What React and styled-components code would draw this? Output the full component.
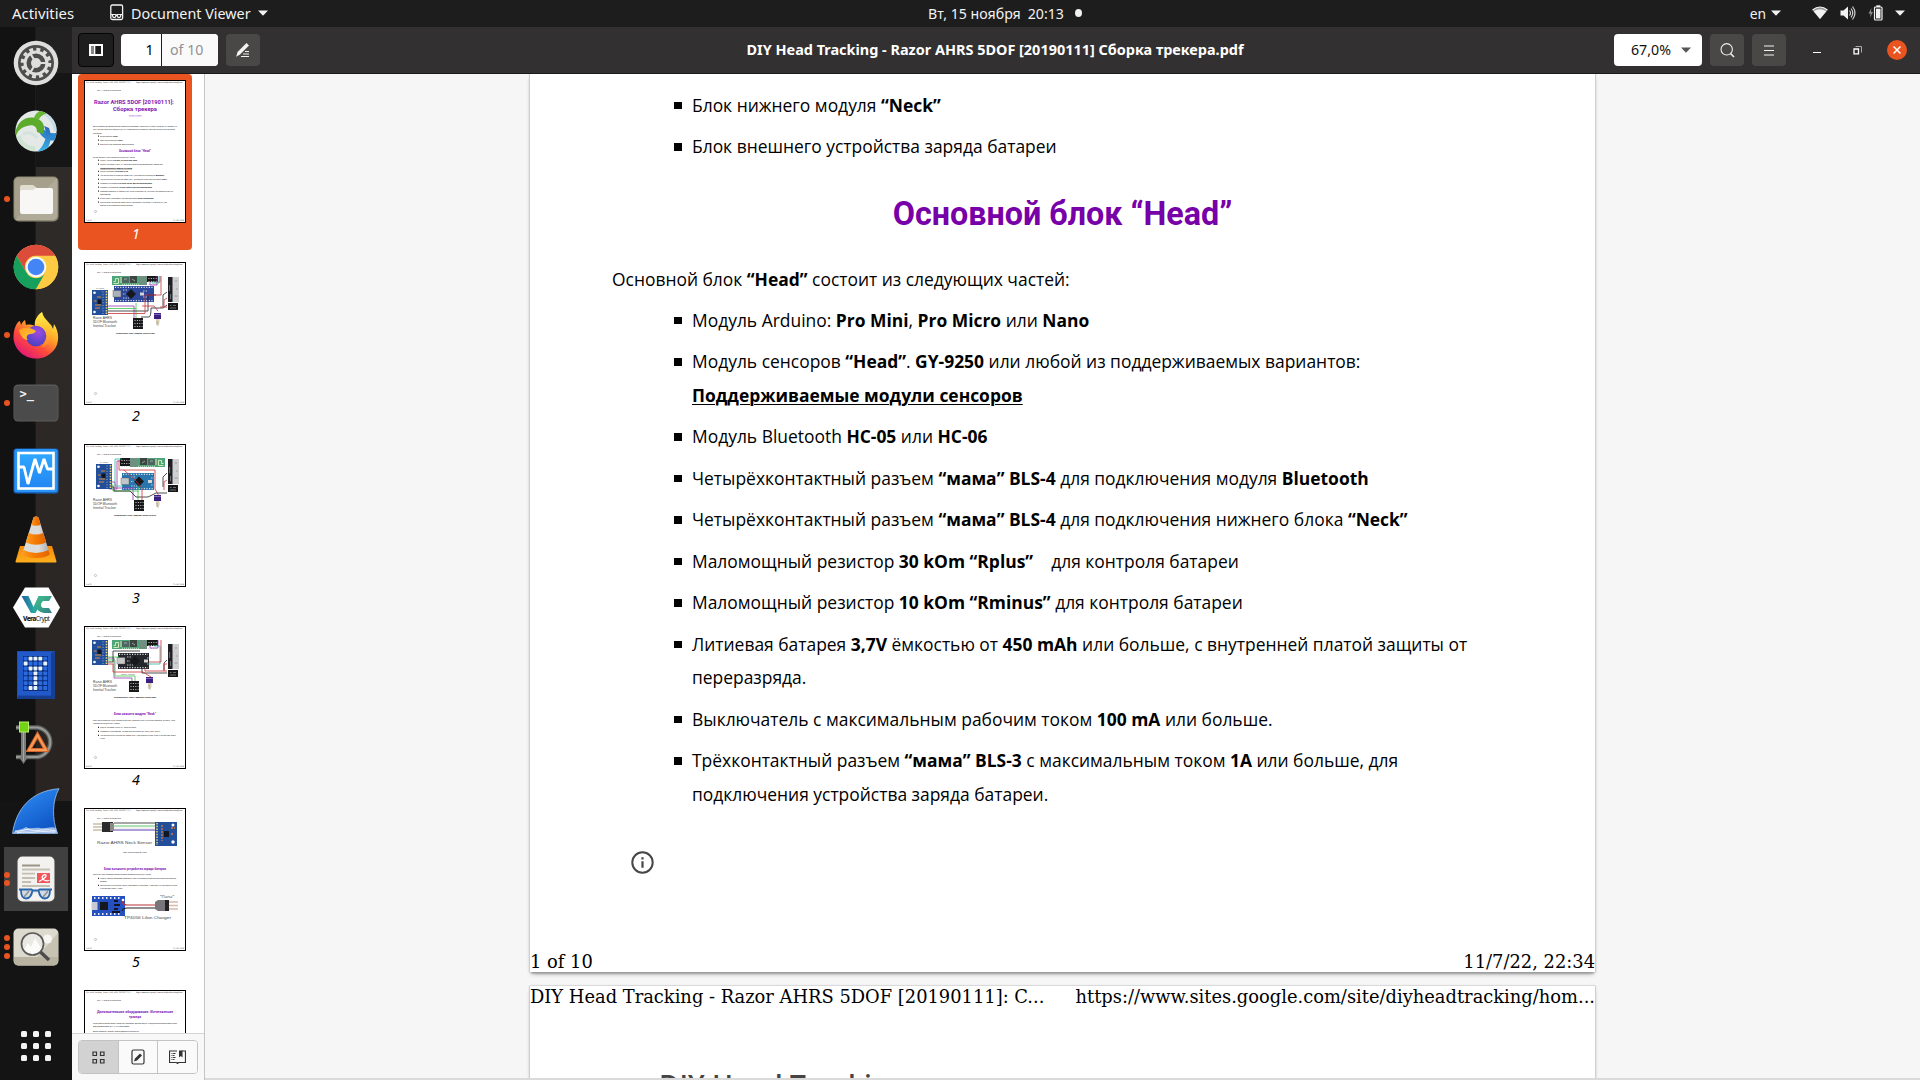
import React from "react";
import styled, { createGlobalStyle, css } from "styled-components";

const ui = `"Noto Sans", "Open Sans", sans-serif`;

const GlobalStyle = createGlobalStyle`
  * { box-sizing: border-box; }
  body { margin: 0; background: #1d1d1d; overflow: hidden; }
  svg { display: block; flex: none; }
`;

/* ---------- shell ---------- */
const Desktop = styled.div`
  width: 1920px;
  height: 1080px;
  display: flex;
  flex-direction: column;
  overflow: hidden;
  font-family: ${ui};
  font-size: 14.2px;
`;
const TopBar = styled.header`
  height: 27px;
  flex: none;
  background: #1d1d1d;
  color: #f2f2f2;
  display: grid;
  grid-template-columns: 1fr auto 1fr;
  align-items: center;
  line-height: 25px;
  padding-bottom: 1px;
`;
const BarGroup = styled.div`
  display: flex;
  align-items: center;
  height: 26px;
  ${(p) => p.$end && css`justify-content: flex-end; padding-right: 15px;`}
`;
const Activities = styled.span`
  width: 97px;
  padding-left: 12px;
  font-size: 14.9px;
`;
const AppName = styled.span`
  margin: 0 7px 0 -4px;
  font-size: 14.35px;
`;
const Clock = styled.div`
  display: flex;
  align-items: center;
  font-size: 14.15px;
  padding-left: 90px;
  span + span { margin-left: 7px; }
  i { width: 7px; height: 8px; border-radius: 50%; background: #f2f2f2; margin-left: 11px; }
`;
const Status = styled.span`
  font-size: 13.8px;
  margin-right: 5px;
`;
const Tray = styled.div`
  display: flex;
  align-items: center;
  gap: 12px;
  margin-left: 31px;
`;
const Body = styled.div`
  flex: 1;
  display: flex;
  min-height: 0;
`;

/* ---------- dock ---------- */
const Dock = styled.nav`
  width: 72px;
  flex: none;
  padding-top: 2px;
  display: flex;
  flex-direction: column;
  background:
    linear-gradient(#222122, #222122) 36px 0 / 36px 46px no-repeat,
    linear-gradient(170deg, #2f2b28, #292422) 36px 140px / 36px 634px no-repeat,
    linear-gradient(90deg, #121212 35px, #1c1c1c 35px, #1c1c1c 36px, #161616 36px) 0 0 / 72px 774px no-repeat,
    #141414;
`;
const DockCell = styled.div`
  height: 68px;
  flex: none;
  display: grid;
  grid-template-columns: 13px 46px 13px;
  align-items: center;
  justify-items: center;
  ${(p) => p.$active && css`
    background: linear-gradient(#404040, #404040) 4px 2px / 64px 64px no-repeat;
  `}
`;
const Dots = styled.div`
  display: flex;
  flex-direction: column;
  gap: 2.8px;
  i { width: 6px; height: 6px; border-radius: 50%; background: #e95420; }
`;
const AppsGrid = styled.div`
  margin-top: auto;
  padding: 0 0 19px 21px;
  display: grid;
  grid-template-columns: repeat(3, 6px);
  gap: 6px;
  i { width: 6px; height: 6px; border-radius: 1.5px; background: #f4f4f4; }
`;

/* ---------- window ---------- */
const Window = styled.main`
  flex: 1;
  display: flex;
  flex-direction: column;
  min-width: 0;
`;
const HeaderBar = styled.div`
  height: 47px;
  flex: none;
  display: grid;
  grid-template-columns: 530px 1fr 530px;
  align-items: center;
  background: #333031;
  border-bottom: 1px solid #1c1a1b;
  padding: 0 13px 0 6px;
`;
const Cluster = styled.div`
  display: flex;
  align-items: center;
  justify-content: ${(p) => (p.$end ? "flex-end" : "flex-start")};
`;
const ToolButton = styled.button`
  width: ${(p) => (p.$on ? 36 : 34)}px;
  height: ${(p) => (p.$on ? 34 : 32)}px;
  padding: 0;
  display: flex;
  align-items: center;
  justify-content: center;
  border: ${(p) => (p.$on ? "1px solid #050505" : "0")};
  border-radius: 4px;
  background: ${(p) => (p.$on ? "#1f1e1f" : "#4a4846")};
  margin-left: ${(p) => p.$gap || 0}px;
`;
const PageEntry = styled.div`
  display: flex;
  width: 97px;
  height: 32px;
  margin-left: 7px;
  border-radius: 4px;
  overflow: hidden;
  line-height: 31px;
  background: #fff;
`;
const PageNow = styled.div`
  width: 41px;
  border-right: 1px solid #1c1c1c;
  text-align: right;
  padding-right: 7.5px;
  color: #000;
`;
const PageTotal = styled.div`
  flex: 1;
  padding-left: 8px;
  background: #fafafa;
  color: #929292;
`;
const Title = styled.h1`
  margin: 0;
  font-size: 14.44px;
  font-weight: 700;
  color: #fff;
  text-align: center;
  white-space: nowrap;
  padding: 0 0 1px 5px;
`;
const ZoomEntry = styled.div`
  width: 88px;
  height: 32px;
  border-radius: 4px;
  background: #fff;
  color: #111;
  display: flex;
  align-items: center;
  padding: 0 11px 1px 17px;
  justify-content: space-between;
`;
const WinButton = styled.button`
  width: 20px;
  height: 20px;
  padding: 0;
  border: 0;
  border-radius: 50%;
  display: flex;
  align-items: center;
  justify-content: center;
  background: ${(p) => (p.$close ? "#e95420" : "transparent")};
  margin-left: ${(p) => p.$gap}px;
`;
const Content = styled.div`
  flex: 1;
  display: flex;
  min-height: 0;
`;

/* ---------- sidebar ---------- */
const Sidebar = styled.aside`
  width: 133px;
  flex: none;
  display: flex;
  flex-direction: column;
  background: #fff;
  border-right: 1px solid #c4c4c4;
`;
const ThumbList = styled.div`
  flex: 1;
  min-height: 0;
  overflow: hidden;
  padding-left: 6px;
`;
const Thumb = styled.div`
  width: 114px;
  height: 176px;
  margin-bottom: 6px;
  border-radius: 4px;
  padding-top: 6px;
  display: flex;
  flex-direction: column;
  align-items: center;
  color: ${(p) => (p.$selected ? "#fff" : "#000")};
  background: ${(p) => (p.$selected ? "#e95420" : "transparent")};
`;
const ThumbPage = styled.div`
  width: 102px;
  height: 143px;
  border: 1px solid #000;
  background: #fff;
  overflow: hidden;
`;
const ThumbLabel = styled.span`
  font-style: italic;
  line-height: 22px;
  padding-left: 2px;
`;
const SideFooter = styled.div`
  height: 47px;
  flex: none;
  border-top: 1px solid #d4d4d4;
  background: #f8f8f8;
  padding: 6px;
`;
const Segments = styled.div`
  display: flex;
  width: 120px;
  height: 34px;
  border: 1px solid #c3c3c3;
  border-radius: 4px;
  overflow: hidden;
`;
const Segment = styled.div`
  flex: 1;
  display: flex;
  align-items: center;
  justify-content: center;
  background: ${(p) => (p.$on ? "#d2d2d2" : "#fafafa")};
  & + & { border-left: 1px solid #c3c3c3; }
`;

/* ---------- document ---------- */
const Canvas = styled.section`
  flex: 1;
  min-width: 0;
  overflow: hidden;
  display: flex;
  flex-direction: column;
  padding-left: 325px;
  border-bottom: 2px solid #dadada;
  background: #f6f6f6;
`;
const Sheet = styled.article`
  width: 1065px;
  flex: none;
  background: #fff;
  height: ${(p) => p.$h}px;
  margin-bottom: 14px;
  display: flex;
  flex-direction: column;
  box-shadow: -1px 0 1px #cfcfcf, 1px 0 1px #cfcfcf, 0 -1px 1px #e0e0e0,
    0 2px 2px -1px #777, 0 3px 5px -2px #888;
  font: 17.43px/33.55px "Open Sans", "Noto Sans", sans-serif;
  color: #000;
`;
const Bullets = styled.ul`
  list-style: none;
  margin: 0;
  padding: ${(p) => p.$top}px 0 0 144px;
`;
const Bullet = styled.li`
  display: flex;
  margin-bottom: 7.95px;
  &::before {
    content: "";
    flex: none;
    width: 7.5px;
    height: 7.5px;
    margin: 13px 10.5px 0 0;
    background: #000;
  }
`;
const Copy = styled.div`
  width: 800px;
  white-space: nowrap;
  u { text-underline-offset: 2px; text-decoration-thickness: 1px; }
`;
const DocHeading = styled.h2`
  margin: 0;
  height: 91.100px;
  padding-top: 23px;
  font: 700 32.3px/38px Roboto, sans-serif;
  color: #7700a8;
  text-align: center;
`;
const Intro = styled.p`
  margin: 0;
  padding-left: 82px;
`;
const InfoMark = styled.div`
  padding: 32px 0 0 101px;
`;
const RunningLine = styled.div`
  display: flex;
  justify-content: space-between;
  font: 17.86px/22px "DejaVu Serif", serif;
  white-space: nowrap;
  ${(p) => p.$foot && css`margin-top: auto; line-height: 20px;`}
`;
const SiteTitle = styled.div`
  padding: 61px 0 0 129px;
  font-size: 28px;
  font-weight: 600;
  line-height: 33px;
  color: #444;
`;

/* ---------- small glyphs ---------- */
const Caret = ({ c = "#f2f2f2", w = 10 }) => (
  <svg width={w} height="6" viewBox="0 0 10 6"><path d="M0 .5h10L5 5.8z" fill={c} /></svg>
);

/* ---------- dock icons ---------- */
const Settings = () => (
  <svg width="46" height="46" viewBox="0 0 46 46">
    <circle cx="23" cy="23" r="22.3" fill="#dededc" />
    <circle cx="23" cy="23" r="18" fill="#4d4d4d" />
    <circle cx="23" cy="23" r="13.7" fill="none" stroke="#dededc" strokeWidth="3.2" strokeDasharray="3.9 3.27" />
    <circle cx="23" cy="23" r="11" fill="none" stroke="#dededc" strokeWidth="3" />
    <circle cx="23" cy="23" r="5" fill="#dededc" />
    <path d="M23 23h11M23 23l-6-10M23 23l-6 10" stroke="#dededc" strokeWidth="2.2" />
  </svg>
);
const Globe = () => (
  <svg width="42" height="42" viewBox="0 0 42 42">
    <defs>
      <clipPath id="gl"><circle cx="21" cy="21" r="20.6" /></clipPath>
      <linearGradient id="glb" x1="0" y1="0" x2="0" y2="1"><stop offset="0" stopColor="#2a62b4" /><stop offset="1" stopColor="#38b4ea" /></linearGradient>
    </defs>
    <g clipPath="url(#gl)">
      <rect width="42" height="42" fill="#e4e8e6" />
      <path d="M3 26q4 12 17 13" fill="none" stroke="#d0e4d4" strokeWidth="5" />
      <path d="M30 3q9 6 11 18" fill="none" stroke="#c4dde6" strokeWidth="4" />
      <path d="M8 24q8-4 14 4" fill="none" stroke="#d3e2da" strokeWidth="3" />
      <path d="M24 14c5 6 8 10 18 9v7c-7 2-14-1-18-8z" fill="#2b87cf" />
      <path d="M29 16c4 8 2 18-7 26h8c6-7 7-16 4-24z" fill="url(#glb)" />
      <path d="M0 24C2 12 10 6 20 8c8 2 11 8 8 16l-6-2c0-6-4-8-10-6C7 17 3 20 1 26z" fill="#5cab2c" />
      <path d="M19 8c1-4 4-7 9-8l6 3c-5 1-9 3-10 7z" fill="#67b634" />
    </g>
  </svg>
);
const Files = () => (
  <svg width="46" height="46" viewBox="0 0 46 46">
    <rect x=".5" y=".5" width="45" height="45" rx="5" fill="#8f8a76" />
    <rect x="1.5" y="1.5" width="43" height="42" rx="4.5" fill="#a59f8b" />
    <path d="M44 2 2 44h39l3-3z" fill="#b0aa98" />
    <path d="M7 11q0-2 2-2h11l4 3h13q2 0 2 2v8H7z" fill="#e0dccf" />
    <path d="M7 16q0-2 2-2h11l3-2h15q2 0 2 2v22q0 2-2 2H9q-2 0-2-2z" fill="#f8f7f5" />
  </svg>
);
const Chrome = () => (
  <svg width="46" height="46" viewBox="0 0 46 46">
    <circle cx="23" cy="23" r="22.3" fill="#fdd04b" />
    <path d="M3.7 11.8A22.3 22.3 0 0 1 42.3 11.8H23A11 11 0 0 0 13.5 28.5z" fill="#dd4b3a" />
    <path d="M3.7 11.8A22.3 22.3 0 0 0 23 45.3L32.6 28.5A11 11 0 0 1 13.4 28.5z" fill="#17a05d" />
    <path d="M23 12h19.3a22.3 22.3 0 0 1-19.3 33.3l9.6-16.8A11 11 0 0 0 23 12z" fill="#fdcb43" />
    <circle cx="23" cy="23" r="10.3" fill="#f4f7fb" />
    <circle cx="23" cy="23" r="8.3" fill="#4385f5" />
  </svg>
);
const Firefox = () => (
  <svg width="46" height="48" viewBox="0 0 46 48">
    <defs>
      <linearGradient id="ff1" x1=".85" y1=".1" x2=".25" y2="1"><stop offset="0" stopColor="#fff14a" /><stop offset=".35" stopColor="#ffa825" /><stop offset=".65" stopColor="#ff4b3a" /><stop offset="1" stopColor="#e0147f" /></linearGradient>
      <radialGradient id="ff2" cx=".6" cy=".3" r=".7"><stop offset="0" stopColor="#a04be0" /><stop offset="1" stopColor="#4a41c4" /></radialGradient>
      <linearGradient id="ff3" x1="0" y1="0" x2="1" y2="1"><stop offset="0" stopColor="#ff9a1f" /><stop offset="1" stopColor="#ffcf3a" /></linearGradient>
      <linearGradient id="ff4" x1="0" y1="0" x2="0" y2="1"><stop offset="0" stopColor="#fff04a" /><stop offset=".6" stopColor="#ffb52c" /><stop offset="1" stopColor="#ff7a30" /></linearGradient>
    </defs>
    <path d="M29 1c1 5 5 8 8 12 2 2 2 3 3 5l1-5c6 9 5 20 0 26-5 6-11 8.5-18 8.5C10 47.5 1 37 .5 27 .3 20 2 15 5 11l2-1 1 4c1-2 2-4 4-5l1 5c4-1 8 0 11 2z" fill="url(#ff1)" />
    <path d="M29 1c-6 4-8 10-7 14 6 2 10 6 10 12 0 5-2 8-5 10 8-1 13-8 11-16-1-8-8-12-9-20z" fill="url(#ff4)" />
    <circle cx="23" cy="25" r="10.3" fill="url(#ff2)" />
    <path d="M6 19c5-3 11-3 17 1-1 2-3 3-6 3-4 1-4 4-2 6-4 0-8-4-9-10z" fill="url(#ff3)" />
  </svg>
);
const Terminal = () => (
  <svg width="46" height="38" viewBox="0 0 46 38">
    <rect x=".5" y=".5" width="45" height="37" rx="4.5" fill="#5c5c5c" />
    <rect x="1.3" y="1.8" width="43.4" height="34.8" rx="4" fill="#4b4b4b" />
    <text x="6.5" y="13.5" fontFamily="DejaVu Sans Mono, monospace" fontWeight="700" fontSize="12" fill="#f2f2f2">&gt;_</text>
  </svg>
);
const Monitor = () => (
  <svg width="46" height="46" viewBox="0 0 46 46">
    <defs><linearGradient id="mo" x1="0" y1="0" x2="0" y2="1"><stop offset="0" stopColor="#2fa8ff" /><stop offset="1" stopColor="#2286f2" /></linearGradient></defs>
    <rect x=".5" y=".5" width="45" height="45" rx="3" fill="#1a66c4" />
    <rect x="1.5" y="1" width="43" height="43" rx="3" fill="#2794f6" />
    <rect x="5.5" y="5" width="35" height="35.5" fill="url(#mo)" stroke="#fff" strokeWidth="2.6" />
    <path d="M6 19h5l4 17 7-25 4.500 14 4.500-14 3.500 10h6" fill="none" stroke="#fff" strokeWidth="2.800" strokeLinejoin="bevel" />
  </svg>
);
const Vlc = () => (
  <svg width="42" height="47" viewBox="0 0 42 47">
    <defs>
      <linearGradient id="vl" x1="0" y1="0" x2="1" y2="0"><stop offset="0" stopColor="#ff9a22" /><stop offset=".45" stopColor="#f57c00" /><stop offset="1" stopColor="#e06300" /></linearGradient>
      <linearGradient id="vw" x1="0" y1="0" x2="1" y2="0"><stop offset="0" stopColor="#d9dadb" /><stop offset=".6" stopColor="#dcdcdc" /><stop offset="1" stopColor="#a9abad" /></linearGradient>
      <linearGradient id="vb" x1="0" y1="0" x2="0" y2="1"><stop offset="0" stopColor="#f58a06" /><stop offset="1" stopColor="#ffb01e" /></linearGradient>
    </defs>
    <path d="M5 30h32l4.5 15.5q0 1-1 1H1.500q-1 0-1-1z" fill="url(#vb)" />
    <path d="M18.5 1.5q2.500-2 5 0L34.500 37q-4 4-13.500 4T7.500 37z" fill="url(#vw)" />
    <path d="M18.5 1.5q2.500-2 5 0l2.200 7.500q-4.700 1.600-9.500 0z" fill="url(#vl)" />
    <path d="M13.7 17q7.300 3 14.500 0l3 9.500q-10 4.500-20.400 0z" fill="url(#vl)" />
    <path d="M8.600 34q12.400 6 24.800 0l1.500 4.500q-5 3.500-13.900 3.500T7 38.500z" fill="url(#vl)" />
  </svg>
);
const Vera = () => (
  <svg width="47" height="41" viewBox="0 0 47 41">
    <defs>
      <linearGradient id="v1" x1="0" y1="0" x2="1" y2="0"><stop offset="0" stopColor="#1f5fa6" /><stop offset=".5" stopColor="#2aa7a0" /><stop offset="1" stopColor="#38b48b" /></linearGradient>
      <linearGradient id="v2" x1="0" y1="0" x2="1" y2="1"><stop offset="0" stopColor="#43c08b" /><stop offset="1" stopColor="#2f7f86" /></linearGradient>
    </defs>
    <path d="M12 .5h23.500L47 20.500 35.500 40.500H12L0 20.500z" fill="#fff" />
    <path d="M8.500 9h7l5 11 5-11h7L22.500 26h-4.500z" fill="url(#v1)" />
    <path d="M39 9H31q-8 1-8 8.500t8 8.500h8l-3-5h-5q-3 0-3-3.500t3-3.500h5z" fill="url(#v2)" />
    <text x="10" y="33.700" fontFamily="Noto Sans, sans-serif" fontSize="6.600" fill="#222" textLength="27"><tspan fontWeight="800">Vera</tspan>Crypt</text>
  </svg>
);
const MATRIX = ["01110", "10001", "01110", "00100", "00100", "00100", "01100"];
const Matrix = () => (
  <svg width="38" height="48" viewBox="0 0 38 48">
    <rect width="38" height="48" fill="#1c4fb4" />
    <rect x="1" y="1" width="36" height="43" fill="#2159c8" />
    <path d="M38 0v48H0l1.500-3H34V2z" fill="#163f94" />
    <rect x="6" y="5" width="25" height="35" fill="#0d2f7d" />
    {MATRIX.flatMap((r, y) => [...r].map((v, x) => (
      <rect key={`${x}-${y}`} x={6.7 + x * 4.9} y={5.7 + y * 4.9} width="3.9" height="3.9" rx=".8" fill={v === "1" ? "#e6f4ff" : "#2b6be0"} />
    )))}
  </svg>
);
const Diagram = () => (
  <svg width="46" height="44" viewBox="0 0 46 44">
    <path d="M3 6.500h22a15 15 0 0 1 0 29.500H3" fill="none" stroke="#5d605c" strokeWidth="4.500" />
    <path d="M3 6.500h22a15 15 0 0 1 0 29.500H3" fill="none" stroke="#999b97" strokeWidth="2" />
    <path d="M8 8h5v28h2l-4.500 7L6 36h2z" fill="#797c77" />
    <path d="M10.500 10v30" stroke="#a5a7a2" strokeWidth="1" />
    <rect x="6.500" y="1" width="9" height="10" fill="#73d216" stroke="#b5ef6d" strokeWidth="1" />
    <path d="M24.500 14 33 29H16z" fill="none" stroke="#d3662a" strokeWidth="4" />
    <path d="M24.500 14 33 29H16z" fill="none" stroke="#f79b57" strokeWidth="2" />
  </svg>
);
const Shark = () => (
  <svg width="48" height="46" viewBox="0 0 48 46">
    <defs><linearGradient id="sh" x1=".2" y1="0" x2=".8" y2="1"><stop offset="0" stopColor="#2f8df5" /><stop offset="1" stopColor="#0b4fc0" /></linearGradient></defs>
    <path d="M.5 45.500C4 22 18 3 47 .7c-7 12-7 31-1.500 44.800z" fill="url(#sh)" stroke="#9cc4ee" strokeWidth=".8" />
    <path d="M1 45c3-4 9-3 13-6 5 3 9 0 14 1 6 1 11-2 16 0l1.500 5z" fill="#9dbbe8" />
    <path d="M3 43c8 1 10-3 16-1 6 2 12-2 25 1M5 45c8-2 12 0 18-1 8-1 12 0 20 0" stroke="#f2f6fc" strokeWidth=".9" fill="none" />
  </svg>
);
const Evince = () => (
  <svg width="38" height="46" viewBox="0 0 38 46">
    <rect x=".5" y=".5" width="37" height="45" rx="5" fill="#e9e8e6" />
    <rect x="1.500" y="1" width="35" height="43" rx="4" fill="#f3f2f1" />
    <path d="M5 9.500h18" stroke="#9b9584" strokeWidth="2" />
    <path d="M5 13.500h28M5 17.700h13M5 22h13M5 26h9M5 30h28" stroke="#c3bfb1" strokeWidth="1.800" />
    <rect x="20" y="17" width="13" height="10" fill="#f2545b" />
    <path d="M22 25.500c4-2 8-5 7-6.500s-5 1-3.500 3.500 5 2.500 7 2" fill="none" stroke="#fff" strokeWidth="1.200" />
    <path d="M4.500 33.800h9.500l2 1.500h5l2-1.500h9.500l-1.500 6q-1 2.700-3.500 2.700-5 0-6.500-6h-5q-1.500 6-6.500 6-2.500 0-3.500-2.700z" fill="#d6dadf" />
    <path d="M2 33.500h12.500l1.500 1h5l1.500-1H35M4 34q0 8.500 5 8.500t6.500-8M33 34q0 8.500-5 8.500t-6.500-8" fill="none" stroke="#2b66ac" strokeWidth="1.800" />
    <path d="M7 41l5-6M26 41l5-6" stroke="#8c9299" strokeWidth="1.500" />
  </svg>
);
const Viewer = () => (
  <svg width="46" height="38" viewBox="0 0 46 38">
    <rect x=".5" y=".5" width="45" height="37" rx="5" fill="#dcd9cd" />
    <path d="M1 29h44v4q0 4.500-4.500 4.500h-35Q1 37.500 1 33z" fill="#b9b4a1" />
    <path d="M24 29 45 5v24z" fill="#c7c3b3" />
    <circle cx="34.500" cy="11" r="4.500" fill="#f7f6f2" />
    <circle cx="19.500" cy="16" r="10.800" fill="#e9e8e2" />
    <path d="m10 23 5-8 3 4 4-9 7 12q-8 8-19 1z" fill="#fbfbfa" />
    <circle cx="19.500" cy="16" r="11" fill="none" stroke="#5a5a5a" strokeWidth="1.700" />
    <path d="M27.500 24 36 32" stroke="#4b4b4b" strokeWidth="3.500" />
  </svg>
);

const DOCK = [
  { I: Settings, n: 0 }, { I: Globe, n: 0 }, { I: Files, n: 1 }, { I: Chrome, n: 0 },
  { I: Firefox, n: 1 }, { I: Terminal, n: 1 }, { I: Monitor, n: 0 }, { I: Vlc, n: 0 },
  { I: Vera, n: 0 }, { I: Matrix, n: 0 }, { I: Diagram, n: 0 }, { I: Shark, n: 0 },
  { I: Evince, n: 2, active: true }, { I: Viewer, n: 3 },
];

/* ---------- page previews ---------- */
const T = ({ x, y, w, s = 1.9, b, c = "#000", f = "Open Sans", u, children }) => (
  <text x={x} y={y} fontSize={s} fontFamily={`${f}, sans-serif`} fontWeight={b ? 700 : 400} fill={c}
    textLength={w} lengthAdjust="spacingAndGlyphs" textDecoration={u ? "underline" : undefined}>{children}</text>
);
const Frame = ({ n, children }) => (
  <svg width="100" height="141" viewBox="1 1 100 141">
    <T x="2" y="3.400" w="46" f="DejaVu Serif">DIY Head Tracking - Razor AHRS 5DOF [20190111]: C...</T>
    <T x="52" y="3.400" w="47.500" f="DejaVu Serif">https://www.sites.google.com/site/diyheadtracking/hom...</T>
    <T x="13" y="11" w="24" s={2.500} c="#222">DIY Head Tracking</T>
    {children}
    <circle cx="11.500" cy="131.500" r="1.100" fill="none" stroke="#777" strokeWidth=".4" />
    <T x="2" y="141" w="5.500" f="DejaVu Serif">{`${n} of 10`}</T>
    <T x="89" y="141" w="11" f="DejaVu Serif">11/7/22, 22:34</T>
  </svg>
);
const Dot = ({ x = 14, y }) => <rect x={x} y={y - 1.2} width="1" height="1" fill="#000" />;

const P1 = [
  [56.8, "Основной блок", "“Head”", 18], [60.8, "Блок нижнего модуля", "“Neck”", 23], [64.8, "Блок внешнего устройства заряда батареи", "", 34],
  [80.9, "Модуль Arduino:", "Pro Mini, Pro Micro или Nano", 37], [84.8, "Модуль сенсоров “Head”. GY-9250 или любой из поддерживаемых вариантов:", "", 63],
  [92, "Модуль Bluetooth", "HC-05 или HC-06", 28], [95.9, "Четырёхконтактный разъем “мама” BLS-4 для подключения модуля", "Bluetooth", 64],
  [99.9, "Четырёхконтактный разъем “мама” BLS-4 для подключения нижнего блока", "“Neck”", 67],
  [103.9, "Маломощный резистор", "30 kOm “Rplus” для контроля батареи", 52], [107.8, "Маломощный резистор", "10 kOm “Rminus” для контроля батареи", 52],
  [111.8, "Литиевая батарея 3,7V ёмкостью от 450 mAh или больше, с внутренней платой защиты от", "", 73],
  [118.9, "Выключатель с максимальным рабочим током", "100 mA или больше.", 54],
  [122.8, "Трёхконтактный разъем “мама” BLS-3 с максимальным током 1A или больше, для", "", 67],
];
const Page1 = () => (
  <Frame n={1}>
    <T x="10" y="24" w="80" s={5.700} b c="#8417b4" f="Roboto">Razor AHRS 5DOF [20190111]:</T>
    <T x="29" y="31.200" w="44" s={5.700} b c="#8417b4" f="Roboto">Сборка трекера</T>
    <T x="45" y="35.800" w="12.500" s={1.600} c="#8417b4" u>ссылка на сайт</T>
    <T x="9" y="47" w="84">Для беспроводной версии трекера потребуется изготовить три основных блока, соединить и настроить их</T>
    <T x="9" y="50" w="82">друг с другом. Питание и передача данных устройства осуществляется через общий разъем контроллера</T>
    <T x="9" y="54" w="9">три блока:</T>
    {P1.map(([y, a, b, w]) => (
      <g key={y}><Dot y={y} /><T x="16" y={y} w={w}>{a} <tspan fontWeight="700">{b}</tspan></T></g>
    ))}
    <T x="35" y="72" w="32" s={3.100} b c="#8417b4" f="Roboto">Основной блок “Head”</T>
    <T x="9" y="77.800" w="42">Основной блок “Head” состоит из следующих частей:</T>
    <T x="16" y="88.600" w="32" b u>Поддерживаемые модули сенсоров</T>
    <T x="16" y="115" w="11">переразряда.</T>
    <T x="16" y="126" w="33">подключения устройства заряда батареи.</T>
  </Frame>
);
const wire = { fill: "none", strokeWidth: 0.8 };
const Sensor = ({ x, y }) => (
  <g transform={`translate(${x} ${y})`}>
    <rect width="16" height="25" fill="#234f9a" />
    <path d="M14.500 1v24" stroke="#e8d37a" strokeWidth="1.600" strokeDasharray="1.500 1.200" />
    <path d="M11 1.500v23" stroke="#d8dbe4" strokeWidth=".7" strokeDasharray="1 1.700" />
    <circle cx="2.500" cy="2.800" r="1.300" fill="#fff" /><circle cx="2.500" cy="22" r="1.300" fill="#fff" />
    <rect x="5.500" y="9.500" width="4" height="4.500" fill="#101522" />
    <path d="M2 11h2.500M3 15h6M3 18h5M5 7h4" stroke="#d98b34" strokeWidth="1" />
  </g>
);
const Battery = ({ x, y }) => (
  <g transform={`translate(${x} ${y})`}>
    <rect width="11" height="25" fill="#cfd0d2" /><rect width="4.500" height="25" fill="#1f1f24" />
    <path d="M1.600 8v6M2.600 17v5M7 4h2M8 12h1.500M6.500 19h3" stroke="#8b8d92" strokeWidth=".8" />
    <rect y="26" width="10" height="7" fill="#17171a" />
    <path d="M2 28.500h1.500M5 28.500h3M2 31h6" stroke="#a7a7a7" strokeWidth=".6" />
  </g>
);
const Pins = ({ x, y, w = 10, h = 11 }) => (
  <g transform={`translate(${x} ${y})`}>
    <rect width={w} height={h} fill="#18181b" />
    <path d={`M1.500 2.500h${w - 2}M1.500 5.500h${w - 2}M1.500 8.500h${w - 2}`} stroke="#c9c9c9" strokeWidth="1" strokeDasharray="1 1.400" />
  </g>
);
const Switch = ({ x, y }) => (
  <g transform={`translate(${x} ${y})`}>
    <rect width="7" height="6" fill="#3b2080" /><path d="M0 1.500h7" stroke="#8b78c8" strokeWidth=".8" />
    <path d="M1.500 6l1.500 5 1 3 1.500-4V6z" fill="#d9d2b8" /><path d="M3 8v4" stroke="#8a846e" strokeWidth=".7" />
  </g>
);
const HC = ({ x, y, flip }) => (
  <g transform={`translate(${x} ${y})${flip ? " translate(35 0) scale(-1 1)" : ""}`}>
    <rect width="35" height="9" fill="#4fa57a" />
    <path d="M1.500 7.500h5v-5h-3v3h-2M9 1v6" stroke="#cfe8b4" strokeWidth="1" fill="none" />
    <rect x="10" y="1" width="7" height="6" fill="#4d6660" /><rect x="18" y="0" width="7" height="7" fill="#3c4641" />
    <path d="M12 3h3M20 3l3 2" stroke="#a9bdb4" strokeWidth=".8" />
    <path d="M10 8.300h17" stroke="#d9f0d2" strokeWidth=".8" strokeDasharray="1 1" />
    <rect x="28" y="0" width="7" height="9" fill="#6f8f80" />
  </g>
);
const Board = ({ x, y, w, h, c, usb = "#aab0b8" }) => (
  <g transform={`translate(${x} ${y})`}>
    <rect width={w} height={h} fill={c} />
    <path d={`M1 1.300h${w - 2}M1 ${h - 1.3}h${w - 2}`} stroke="#dfe4ec" strokeWidth="1.300" strokeDasharray="1.100 1.500" />
    <rect x="-1" y={h / 2 - 3.5} width="8" height="6.500" fill={usb} stroke="#555" strokeWidth=".4" />
    <path d={`M9 4h5M9 ${h - 4}h6M29 5h5M29 ${h - 5}h4M9 ${h / 2}h3`} stroke="#c5cede" strokeWidth=".9" strokeDasharray="1.500 1" />
    <path d={`M17 ${h / 2 - 5}l5 5-5 5-5-5z`} fill="#17181d" />
    <rect x="26" y={h / 2 - 1.5} width="4" height="3" fill="#d6d6d0" />
  </g>
);
const Legend = ({ y }) => (
  <g>
    <T x="9" y={y} w="19" s={3} c="#444" f="Liberation Sans">Razor AHRS</T>
    <T x="9" y={y + 3.8} w="24" s={3} c="#444" f="Liberation Sans">5DOF Bluetooth</T>
    <T x="9" y={y + 7.5} w="23" s={3} c="#444" f="Liberation Sans">Inertial Tracker</T>
  </g>
);
const Page2 = () => (
  <Frame n={2}>
    <HC x={28} y={14} />
    <Pins x={63} y={14} w={11} h={6} />
    <Board x={30} y={24} w={40} h={16} c="#2d479a" />
    <path {...wire} stroke="#9a36b0" d="M66 20v3h7v-9M24 44h26v14" />
    <path {...wire} stroke="#2bb8a4" d="M68 19v2h7v-7" />
    <path {...wire} stroke="#777" d="M70 20h6v-6" />
    <path {...wire} stroke="#3cc84a" d="M24 46.500h28V58M52 41v6" />
    <path {...wire} stroke="#222" d="M24 49h40V33h8M57 55h8q2 0 2-9h12l4-3M83 30l-4 3v12" />
    <path {...wire} stroke="#c83238" d="M24 51.500h37V33h16V14M58 44l12 0 4 5M83 45h-7M83 36l-3 2v6" />
    <T x="12" y="27" w="8" s={2.200} c="#555">GY9250</T>
    <Sensor x={8} y={28} /><Pins x={49} y={56} /><Switch x={70} y={51} /><Battery x={84} y={15} />
    <Legend y={57} />
    <T x="32" y="72" w="39" b>Основной блок “Head” с модулем Arduino Pro Mini</T>
  </Frame>
);
const Page3 = () => (
  <Frame n={3}>
    <HC x={46} y={14} flip /><Pins x={36} y={14} w={10} h={8} />
    <Board x={38} y={29} w={32} h={17} c="#2876ad" usb="#c2c6cc" />
    <path {...wire} stroke="#9a36b0" d="M36 17h-3v28h-8M24 38h7v6h18v12" />
    <path {...wire} stroke="#2bb8a4" d="M38 15h-7v27h8" />
    <path {...wire} stroke="#3cc84a" d="M24 41h5v6h25v9M54 42v6" />
    <path {...wire} stroke="#222" d="M24 43h6v4h16l6 6h12l8-4h11M83 29l-4 4v10" />
    <path {...wire} stroke="#c83238" d="M35 16v10h36v19l4 7M40 26l11 10 7 8v14M83 36l-3 2v8" />
    <T x="16" y="18.500" w="8" s={2.200} c="#555">GY9250</T>
    <Sensor x={12} y={20} /><Pins x={50} y={56} /><Switch x={70} y={51} /><Battery x={84} y={15} />
    <Legend y={57} />
    <T x="30" y="72" w="42" b>Основной блок “Head” с модулем Arduino Pro Micro</T>
  </Frame>
);
const Page4 = () => (
  <Frame n={4}>
    <HC x={28} y={14} /><Pins x={63} y={14} w={11} h={6} />
    <Board x={34} y={27} w={31} h={16} c="#25262b" usb="#c8c8c8" />
    <path {...wire} stroke="#9a36b0" d="M66 20v2h8v-8M24 32h6v20h18v6" />
    <path {...wire} stroke="#2bb8a4" d="M70 20h6v18H65" />
    <path {...wire} stroke="#3cc84a" d="M24 34h7v16h20v8M24 31h11" />
    <path {...wire} stroke="#222" d="M24 36h5V25h27M58 43v4h25M83 34l-3 3v8" />
    <path {...wire} stroke="#c83238" d="M24 38h5v8h30l8 5M77 14v22H65M83 45H61V42M83 38h-3v6" />
    <T x="37" y="49" w="14" s={2} c="#555">Battery Monitor</T>
    <Sensor x={8} y={14} /><Pins x={45} y={55} /><Switch x={62} y={51} /><Battery x={84} y={18} />
    <Legend y={57} />
    <T x="30" y="72" w="42" b>Основной блок “Head” с модулем Arduino Nano</T>
    <T x="30" y="89" w="42" s={3} b c="#8417b4" f="Roboto">Блок нижнего модуля “Neck”</T>
    <T x="9" y="95" w="82">Блок нижнего модуля “Neck” состоит из датчика, закреплённого на шее пользователя, сенсор GY-9250</T>
    <T x="9" y="98" w="27">Состоит из следующих частей:</T>
    <Dot y={102} /><T x="16" y="102" w="36">Модуль сенсоров “Neck”: GY-9250/MPU9250</T>
    <Dot y={106} /><T x="16" y="106" w="60">Маломощный резистор 10 kOm для контроля I2C шины (SDA и SCL)</T>
    <Dot y={110} /><T x="16" y="110" w="76">Четырёхконтактный разъем “мама” BLS-4 для подключения “Neck” к основному блоку</T>
    <T x="16" y="113" w="5">“Head”</T>
  </Frame>
);
const Page5 = () => (
  <Frame n={5}>
    <path {...wire} stroke="#c9bfa8" strokeWidth="1.500" d="M9 16h10M9 19h10M9 22h10" />
    <rect x="18" y="14" width="11" height="10" fill="#2b2b2d" /><rect x="26" y="15" width="4" height="8" fill="#8d8a86" />
    <path {...wire} stroke="#222" d="M30 15h41" /><path {...wire} stroke="#35b848" d="M30 18h41" />
    <path {...wire} stroke="#ddd" d="M30 20h41" /><path {...wire} stroke="#5b3fae" strokeWidth="1.200" d="M30 22h41" />
    <g transform="translate(71 14)">
      <rect width="22" height="24" fill="#234f9a" /><rect x="9" y="9" width="5" height="6" fill="#121724" />
      <path d="M2 1v22" stroke="#e8d37a" strokeWidth="1.500" strokeDasharray="1.500 1.200" />
      <path d="M7 3v16M16 6h4M16 12h3" stroke="#dd7b46" strokeWidth="1.300" strokeDasharray="2 1" />
      <circle cx="18" cy="20" r="1.700" fill="#fff" /><circle cx="18" cy="3" r="1.500" fill="#fff" />
    </g>
    <T x="13" y="36" w="55" s={4.300} c="#444" f="Liberation Sans">Razor AHRS Neck Sensor</T>
    <T x="39" y="45" w="24">Блок нижнего модуля “Neck”</T>
    <T x="20" y="62" w="62" s={3} b c="#8417b4" f="Roboto">Блок внешнего устройства заряда батареи</T>
    <T x="9" y="67" w="58">Блок внешнего устройства заряда батареи состоит из следующих частей:</T>
    <Dot y={71} /><T x="16" y="71" w="76">Модуль заряда литиевой батареи TP4056 с защитой от перегрузки и полного разряда</T>
    <T x="16" y="74" w="7">батареи.</T>
    <Dot y={78} /><T x="16" y="78" w="77">Трёхконтактный разъем “папа” с максимальным током 1A или больше для подключения</T>
    <T x="16" y="81" w="23">к основному блоку “Head”.</T>
    <g transform="translate(8 88)">
      <rect width="33" height="20" fill="#2450c0" /><rect x="8" y="6" width="8" height="8" fill="#16181f" />
      <rect x="-.5" y="6" width="6" height="8" fill="#c9cbd0" />
      <path d="M2 2h28M2 18h28" stroke="#e1e6f4" strokeWidth="1.800" strokeDasharray="1.500 2.500" />
      <path d="M22 5h4M22 9h6M22 13h4M20 16h8" stroke="#101426" strokeWidth="2" /><circle cx="31" cy="4" r="1.300" fill="#fff" />
    </g>
    <path {...wire} stroke="#b7353a" strokeWidth="1.200" d="M38 93q1 4 5 4h28" /><path {...wire} stroke="#222" strokeWidth="1.200" d="M38 103q1-3 5-3h28" />
    <path d="M71 94l3-2h8v11h-8l-3-2z" fill="#77757a" /><rect x="81" y="92" width="4" height="11" fill="#222" />
    <path {...wire} stroke="#d8b9ac" strokeWidth="1.300" d="M85 94h9M85 97.500h9M85 101h9" />
    <T x="76" y="90" w="14" s={3} c="#444">“Папа”</T>
    <T x="40" y="111" w="47" s={4} c="#444" f="Liberation Sans">TP4056 LiIon Charger</T>
  </Frame>
);
const Page6 = () => (
  <Frame n={6}>
    <T x="13" y="22.500" w="76" s={3.200} b c="#8417b4" f="Roboto">Дополнительное оборудование. Изготовление</T>
    <T x="45" y="27.500" w="12" s={3.200} b c="#8417b4" f="Roboto">трекера</T>
    <T x="9" y="33.500" w="84">Также можно использовать зарядное устройство. Другой модуль с поддержкой батареи имеет свою</T>
    <T x="9" y="36.500" w="37">поддержкой 5V/1A/USB порт.</T>
    <T x="9" y="41.500" w="46">Далее приведён список необходимого инструмента:</T>
  </Frame>
);
const PAGES = [Page1, Page2, Page3, Page4, Page5, Page6];

/* ---------- document copy ---------- */
const PARTS = [
  <>Модуль Arduino: <b>Pro Mini</b>, <b>Pro Micro</b> или <b>Nano</b></>,
  <>Модуль сенсоров <b>“Head”</b>. <b>GY-9250</b> или любой из поддерживаемых вариантов:<br /><b><u>Поддерживаемые модули сенсоров</u></b></>,
  <>Модуль Bluetooth <b>HC-05</b> или <b>HC-06</b></>,
  <>Четырёхконтактный разъем <b>“мама” BLS-4</b> для подключения модуля <b>Bluetooth</b></>,
  <>Четырёхконтактный разъем <b>“мама” BLS-4</b> для подключения нижнего блока <b>“Neck”</b></>,
  <>Маломощный резистор <b>30 kOm “Rplus”</b> &nbsp;&nbsp; для контроля батареи</>,
  <>Маломощный резистор <b>10 kOm “Rminus”</b> для контроля батареи</>,
  <>Литиевая батарея <b>3,7V</b> ёмкостью от <b>450 mAh</b> или больше, с внутренней платой защиты от<br />переразряда.</>,
  <>Выключатель с максимальным рабочим током <b>100 mA</b> или больше.</>,
  <>Трёхконтактный разъем <b>“мама” BLS-3</b> с максимальным током <b>1A</b> или больше, для<br />подключения устройства заряда батареи.</>,
];

export default function App() {
  return (
    <Desktop>
      <GlobalStyle />
      <TopBar>
        <BarGroup>
          <Activities>Activities</Activities>
          <svg width="38" height="18" viewBox="-13 0 38 18">
            <rect x=".8" y="1" width="11.800" height="14.500" rx="1.500" fill="none" stroke="#f2f2f2" strokeWidth="1.300" />
            <path d="M1 10.500h4.500l1 1 1-1H12M2.500 11q0 2.500 1.700 2.500T6 11M7.300 11q0 2.500 1.700 2.500T10.800 11" fill="none" stroke="#f2f2f2" strokeWidth="1.200" />
          </svg>
          <AppName>Document Viewer</AppName>
          <Caret />
        </BarGroup>
        <Clock><span>Вт, 15 ноября</span><span>20:13</span><i /></Clock>
        <BarGroup $end>
          <Status>en</Status>
          <Caret />
          <Tray>
            <svg width="16" height="14" viewBox="0 0 16 14"><path d="M.5 4q7.500-6 15 0L8 13z" fill="#999" /><path d="M1.600 5.300Q8 1 14.400 5.300L8 13z" fill="#f2f2f2" /><path d="M.5 4q7.500-6 15 0" stroke="#f2f2f2" fill="none" strokeWidth="1.200" /></svg>
            <svg width="16" height="16" viewBox="0 0 16 16"><path d="M.5 5.500h3L8 1.500v13l-4.500-4h-3z" fill="#f2f2f2" /><path d="M9.500 5.500q2 2.500 0 5M11 3.500q3.500 4.500 0 9M12.500 1.500q5 6.500 0 13" stroke="#d0d0d0" fill="none" strokeWidth="1.200" /></svg>
            <svg width="15" height="16" viewBox="0 0 15 16"><path d="M3.500 3 .5 8.500h2l-.5 4L5 7H3z" fill="#8d8d8d" /><rect x="6.500" y="2" width="7.500" height="13" rx="1" fill="none" stroke="#f2f2f2" strokeWidth="1.200" /><rect x="8" y="3.700" width="4.500" height="9.800" fill="#f2f2f2" /><rect x="8.300" y=".3" width="4" height="1.700" fill="#f2f2f2" /></svg>
            <Caret />
          </Tray>
        </BarGroup>
      </TopBar>
      <Body>
        <Dock>
          {DOCK.map(({ I, n, active }, k) => (
            <DockCell key={k} $active={active}>
              <Dots>{Array.from({ length: n }, (_, i) => <i key={i} />)}</Dots>
              <I />
            </DockCell>
          ))}
          <AppsGrid>{Array.from({ length: 9 }, (_, i) => <i key={i} />)}</AppsGrid>
        </Dock>
        <Window>
          <HeaderBar>
            <Cluster>
              <ToolButton $on>
                <svg width="14" height="12" viewBox="0 0 14 12"><path d="M0 0h14v12H0z" fill="#fff" /><path d="M2 2h3v8H2z" fill="#888" /><path d="M6.300 2H12v8H6.300z" fill="#1f1e1f" /></svg>
              </ToolButton>
              <PageEntry><PageNow>1</PageNow><PageTotal>of 10</PageTotal></PageEntry>
              <ToolButton $gap={8}>
                <svg width="16" height="16" viewBox="0 0 16 16"><path d="M11.500 1 14 3.500 5 12.500l-3.800 2.300L2.500 10z" fill="#f2f2f2" /><path d="M10 9.500h4M8 12h6M6 14.500h8" stroke="#f2f2f2" strokeWidth="1.200" /></svg>
              </ToolButton>
            </Cluster>
            <Title>DIY Head Tracking - Razor AHRS 5DOF [20190111] Сборка трекера.pdf</Title>
            <Cluster $end>
              <ZoomEntry>67,0% <Caret c="#555" /></ZoomEntry>
              <ToolButton $gap={8}>
                <svg width="15" height="15" viewBox="0 0 15 15"><circle cx="6.700" cy="6.300" r="5.700" fill="none" stroke="#eee" strokeWidth="1.100" /><path d="m10.500 10.500 3.500 3.500" stroke="#eee" strokeWidth="1.600" /></svg>
              </ToolButton>
              <ToolButton $gap={8}>
                <svg width="10" height="11" viewBox="0 0 10 11"><path d="M0 1h10M0 5.500h10M0 10h10" stroke="#f2f2f2" strokeWidth="1.100" /></svg>
              </ToolButton>
              <WinButton $gap={21}><svg width="8" height="8" viewBox="0 0 8 8"><path d="M0 6.500h8" stroke="#fff" /></svg></WinButton>
              <WinButton $gap={20}><svg width="9" height="9" viewBox="0 0 9 9"><path d="M2.500.5h6v6" stroke="#aaa" fill="none" /><path d="M1 3h4.500v4.800H1z" stroke="#fff" strokeWidth="1.300" fill="none" /></svg></WinButton>
              <WinButton $close $gap={20}><svg width="8" height="8" viewBox="0 0 8 8"><path d="m.5.5 7 7m0-7-7 7" stroke="#fff" strokeWidth="1.500" /></svg></WinButton>
            </Cluster>
          </HeaderBar>
          <Content>
            <Sidebar>
              <ThumbList>
                {PAGES.map((P, i) => (
                  <Thumb key={i} $selected={i === 0}><ThumbPage><P /></ThumbPage><ThumbLabel>{i + 1}</ThumbLabel></Thumb>
                ))}
              </ThumbList>
              <SideFooter>
                <Segments>
                  <Segment $on><svg width="13" height="13" viewBox="0 0 13 13"><path d="M1 1h3.500v3.500H1zM8.500 1H12v3.500H8.500zM1 8.500h3.500V12H1zM8.500 8.500H12V12H8.500z" fill="none" stroke="#333" strokeWidth="1.200" /></svg></Segment>
                  <Segment><svg width="14" height="16" viewBox="0 0 14 16"><rect x="1" y="1" width="12" height="14" rx="1.500" fill="none" stroke="#333" strokeWidth="1.200" /><path d="m9 4.500 2 2-5 5-3 1 1-3z" fill="#333" /></svg></Segment>
                  <Segment><svg width="17" height="14" viewBox="0 0 17 14"><path d="M7.500 12.500h-7V1H8M12.500 1h4v11.500h-7l-1 1-1-1" fill="none" stroke="#333" strokeWidth="1.200" /><path d="M10 .5h3.500v7l-1.700-1.500L10 7.500z" fill="#333" /><path d="M2.500 3.500h4M2.500 5.500h3M2.500 7.500h4M2.500 9.500h3" stroke="#333" strokeDasharray="1 .6 3 0" /></svg></Segment>
                </Segments>
              </SideFooter>
            </Sidebar>
            <Canvas>
              <Sheet $h={898}>
                <Bullets $top={14.6}>
                  <Bullet><Copy>Блок нижнего модуля <b>“Neck”</b></Copy></Bullet>
                  <Bullet><Copy>Блок внешнего устройства заряда батареи</Copy></Bullet>
                </Bullets>
                <DocHeading>Основной блок “Head”</DocHeading>
                <Intro>Основной блок <b>“Head”</b> состоит из следующих частей:</Intro>
                <Bullets $top={7.4}>
                  {PARTS.map((p, i) => <Bullet key={i}><Copy>{p}</Copy></Bullet>)}
                </Bullets>
                <InfoMark>
                  <svg width="23" height="23" viewBox="0 0 23 23"><circle cx="11.500" cy="11.500" r="10.200" fill="none" stroke="#444746" strokeWidth="2" /><path d="M10.400 10.300h2.200v6.500h-2.200zM10.400 6.300h2.200v2.200h-2.200z" fill="#444746" /></svg>
                </InfoMark>
                <RunningLine $foot><span>1 of 10</span><span>11/7/22, 22:34</span></RunningLine>
              </Sheet>
              <Sheet $h={200}>
                <RunningLine><span>DIY Head Tracking - Razor AHRS 5DOF [20190111]: C...</span><span>https://www.sites.google.com/site/diyheadtracking/hom...</span></RunningLine>
                <SiteTitle>DIY Head Tracking</SiteTitle>
              </Sheet>
            </Canvas>
          </Content>
        </Window>
      </Body>
    </Desktop>
  );
}
